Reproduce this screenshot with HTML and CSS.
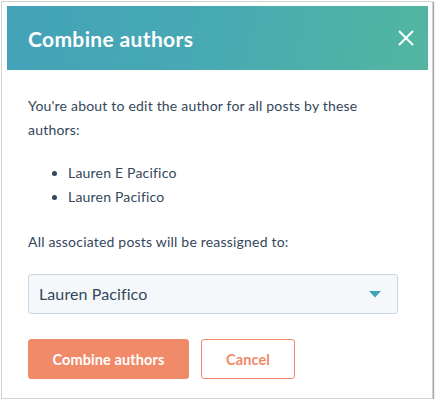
FILE: index.html
```html
<!DOCTYPE html>
<html>
<head>
<meta charset="utf-8">
<link rel="stylesheet" href="styles.css">
</head>
<body>
<div class="frame">
  <div class="modal">
    <div class="modal-header">
      <h2 class="modal-title">Combine authors</h2>
      <button class="close" aria-label="Close">
        <svg width="16" height="16" viewBox="0 0 16 16"><path d="M1 1 L15 15 M15 1 L1 15" stroke="#fff" stroke-width="2" fill="none"/></svg>
      </button>
    </div>
    <div class="modal-body">
      <p class="intro">You're about to edit the author for all posts by these authors:</p>
      <ul class="authors">
        <li>Lauren E Pacifico</li>
        <li>Lauren Pacifico</li>
      </ul>
      <p class="reassign">All associated posts will be reassigned to:</p>
      <div class="select">
        <span>Lauren Pacifico</span>
        <svg class="caret" width="12" height="7" viewBox="0 0 12 7"><path d="M0 0 H12 L6 6.5 Z" fill="#3fa2b8"/></svg>
      </div>
      <div class="actions">
        <button class="btn btn-primary">Combine authors</button>
        <button class="btn btn-secondary">Cancel</button>
      </div>
    </div>
  </div>
</div>
</body>
</html>
```
FILE: styles.css
```css
* { box-sizing: border-box; }
html, body { margin: 0; padding: 0; background: #fff; }
body { font-family: Lato, "Open Sans", sans-serif; color: #33475b; }
.frame {
  margin: 1px 0 0 1px;
  width: 432px;
  height: 398px;
  border: 1px solid #d2d2d2;
  box-shadow: 1px 1px 1px rgba(0,0,0,0.35);
  padding: 4px 4px 0 5px;
}
.modal { background: #fff; }
.modal-header {
  height: 64px;
  background: linear-gradient(100deg, #43a2b9 0%, #48aab2 50%, #52b6a1 100%);
  display: flex;
  align-items: center;
  justify-content: space-between;
  padding: 0 14px 0 21px;
}
.modal-title {
  margin: 0;
  color: #fff;
  font-size: 21px;
  font-weight: 700;
  letter-spacing: 0.35px;
}
.close {
  background: none;
  border: 0;
  padding: 0;
  width: 16px;
  height: 16px;
  display: flex;
}
.modal-body { padding: 24px 30px 0 21px; font-size: 14px; line-height: 24px; letter-spacing: 0.2px; }
.intro { margin: 0; }
.authors { margin: 19px 0 0; padding-left: 40px; }
.authors li { line-height: 24px; }
.reassign { margin: 21px 0 0; }
.select {
  margin-top: 20px;
  height: 40px;
  background: #f5f8fa;
  border: 1px solid #cbd6e2;
  border-radius: 3px;
  display: flex;
  align-items: center;
  justify-content: space-between;
  padding: 0 16px 0 10px;
  font-size: 16px;
  letter-spacing: 0.1px;
}
.caret { margin-top: 1px; }
.actions { display: flex; gap: 12px; margin-top: 25px; }
.btn {
  height: 40px;
  border-radius: 3px;
  font-family: Lato, sans-serif;
  font-size: 14.5px;
  font-weight: 700;
  letter-spacing: 0.1px;
  border: 1px solid #f08a69;
}
.btn-primary { width: 161px; background: #f08a69; color: #fff; }
.btn-secondary { width: 94px; background: #fff; color: #f08a69; }
```
